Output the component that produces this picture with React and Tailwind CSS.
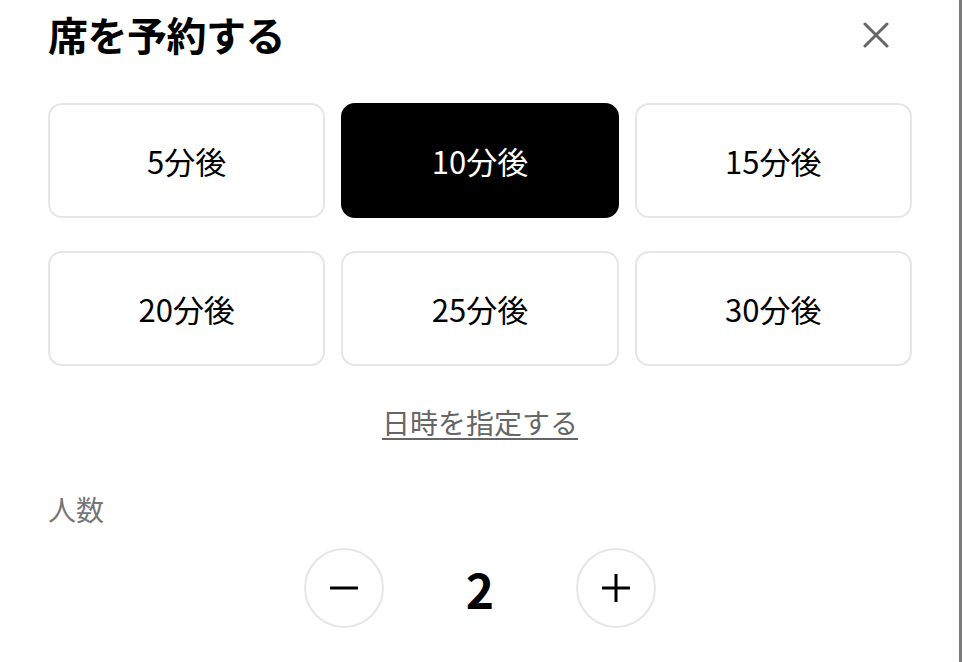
import { useState } from 'react'

const OPTIONS = [5, 10, 15, 20, 25, 30]

export default function App() {
  const [selected, setSelected] = useState(10)
  const [count, setCount] = useState(2)

  return (
    <div
      className="w-[962px] h-[662px] bg-white overflow-hidden border-r-[3px] border-[#7a7a7a] text-black"
      style={{ fontFamily: '"Noto Sans CJK JP", "Noto Sans", sans-serif' }}
    >
      <div className="pl-[48px] pr-[47px]">
        {/* Header */}
        <div className="h-[76px] flex items-center justify-between">
          <h1 className="text-[40px] font-bold leading-none tracking-[-0.5px] relative top-[-4px]">席を予約する</h1>
          <button className="w-[36px] h-[36px] flex items-center justify-center mr-[18px] mb-[6px]">
            <svg width="26" height="26" viewBox="0 0 26 26" fill="none" stroke="#666" strokeWidth="3" strokeLinecap="round">
              <path d="M2 2 L24 24 M24 2 L2 24" />
            </svg>
          </button>
        </div>

        {/* Time options */}
        <div className="grid grid-cols-3 gap-x-[16px] gap-y-[33px] mt-[27px]">
          {OPTIONS.map((m) => (
            <button
              key={m}
              onClick={() => setSelected(m)}
              className={
                selected === m
                  ? 'h-[115px] rounded-[14px] border-2 border-black bg-black text-white text-[31px] leading-none'
                  : 'h-[115px] rounded-[14px] border-2 border-[#e6e6e6] bg-white text-black text-[31px] leading-none'
              }
            >
              <span>{m}分後</span>
            </button>
          ))}
        </div>

        {/* Specify date */}
        <div className="mt-[38px] flex justify-center">
          <a href="#" className="text-[28px] leading-[36px] text-[#666] underline underline-offset-[4px] decoration-2">
            日時を指定する
          </a>
        </div>

        {/* People */}
        <div className="mt-[51px] text-[28px] leading-[36px] text-[#777]">人数</div>

        <div className="mt-[21px] flex items-center justify-center gap-[72px]">
          <button
            onClick={() => setCount((c) => Math.max(1, c - 1))}
            className="w-[80px] h-[80px] rounded-full border-2 border-[#e6e6e6] flex items-center justify-center"
          >
            <svg width="28" height="4" viewBox="0 0 28 4">
              <rect x="0" y="0.5" width="28" height="3" fill="#000" />
            </svg>
          </button>
          <div className="w-[48px] text-center text-[48px] font-bold leading-none">{count}</div>
          <button
            onClick={() => setCount((c) => c + 1)}
            className="w-[80px] h-[80px] rounded-full border-2 border-[#e6e6e6] flex items-center justify-center"
          >
            <svg width="28" height="28" viewBox="0 0 28 28">
              <rect x="0" y="12.5" width="28" height="3" fill="#000" />
              <rect x="12.5" y="0" width="3" height="28" fill="#000" />
            </svg>
          </button>
        </div>
      </div>
    </div>
  )
}
